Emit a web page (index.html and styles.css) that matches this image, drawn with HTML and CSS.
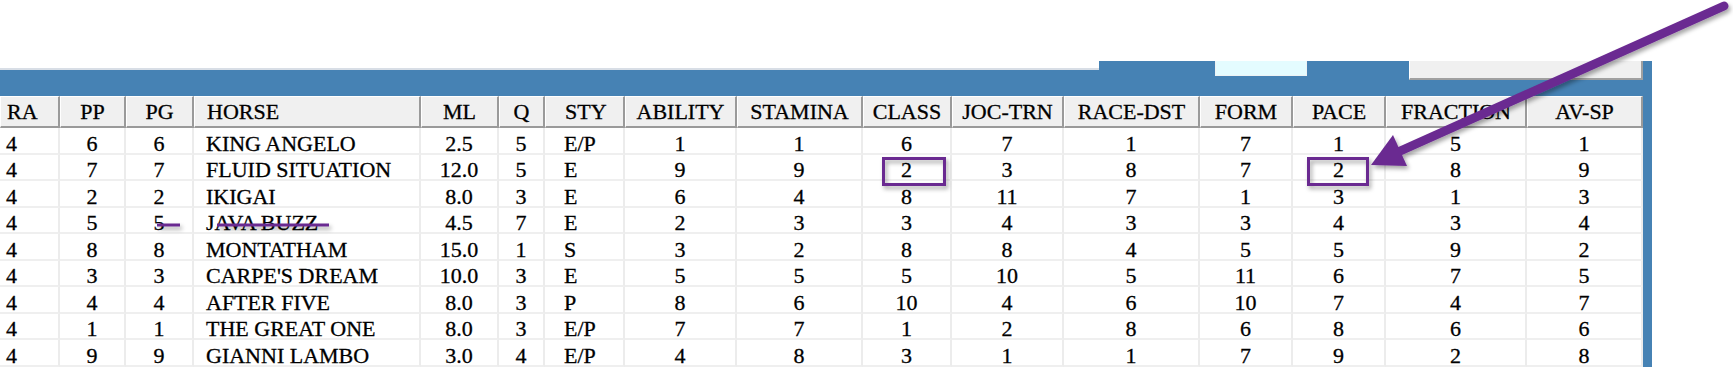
FILE: index.html
```html
<!DOCTYPE html>
<html lang="en">
<head>
  <meta charset="UTF-8" />
  <title>Race Grid</title>
  <link rel="stylesheet" href="styles.css">
</head>
<body>

  <div class="top"></div>

  <div class="frame">
    <div class="bar">
      <div class="strip"></div>
      <div class="field"></div>
      <div class="btn"></div>
    </div>

    <table class="grid">
      <colgroup>
        <col style="width:60px"><col style="width:66px"><col style="width:68px"><col style="width:227px">
        <col style="width:78px"><col style="width:46px"><col style="width:80px"><col style="width:112px">
        <col style="width:126px"><col style="width:89px"><col style="width:112px"><col style="width:136px">
        <col style="width:93px"><col style="width:93px"><col style="width:141px"><col style="width:116px">
      </colgroup>
      <thead>
        <tr>
          <th class="ra">RA</th><th>PP</th><th>PG</th><th class="name">HORSE</th>
          <th>ML</th><th>Q</th><th class="sty">STY</th><th>ABILITY</th>
          <th>STAMINA</th><th>CLASS</th><th>JOC-TRN</th><th>RACE-DST</th>
          <th>FORM</th><th>PACE</th><th>FRACTION</th><th>AV-SP</th>
        </tr>
      </thead>
      <tbody>
        <tr><td class="ra">4</td><td>6</td><td>6</td><td class="name">KING ANGELO</td><td>2.5</td><td>5</td><td class="sty">E/P</td><td>1</td><td>1</td><td>6</td><td>7</td><td>1</td><td>7</td><td>1</td><td>5</td><td>1</td></tr>
        <tr><td class="ra">4</td><td>7</td><td>7</td><td class="name">FLUID SITUATION</td><td>12.0</td><td>5</td><td class="sty">E</td><td>9</td><td>9</td><td>2</td><td>3</td><td>8</td><td>7</td><td>2</td><td>8</td><td>9</td></tr>
        <tr><td class="ra">4</td><td>2</td><td>2</td><td class="name">IKIGAI</td><td>8.0</td><td>3</td><td class="sty">E</td><td>6</td><td>4</td><td>8</td><td>11</td><td>7</td><td>1</td><td>3</td><td>1</td><td>3</td></tr>
        <tr><td class="ra">4</td><td>5</td><td>5</td><td class="name">JAVA BUZZ</td><td>4.5</td><td>7</td><td class="sty">E</td><td>2</td><td>3</td><td>3</td><td>4</td><td>3</td><td>3</td><td>4</td><td>3</td><td>4</td></tr>
        <tr><td class="ra">4</td><td>8</td><td>8</td><td class="name">MONTATHAM</td><td>15.0</td><td>1</td><td class="sty">S</td><td>3</td><td>2</td><td>8</td><td>8</td><td>4</td><td>5</td><td>5</td><td>9</td><td>2</td></tr>
        <tr><td class="ra">4</td><td>3</td><td>3</td><td class="name">CARPE'S DREAM</td><td>10.0</td><td>3</td><td class="sty">E</td><td>5</td><td>5</td><td>5</td><td>10</td><td>5</td><td>11</td><td>6</td><td>7</td><td>5</td></tr>
        <tr><td class="ra">4</td><td>4</td><td>4</td><td class="name">AFTER FIVE</td><td>8.0</td><td>3</td><td class="sty">P</td><td>8</td><td>6</td><td>10</td><td>4</td><td>6</td><td>10</td><td>7</td><td>4</td><td>7</td></tr>
        <tr><td class="ra">4</td><td>1</td><td>1</td><td class="name">THE GREAT ONE</td><td>8.0</td><td>3</td><td class="sty">E/P</td><td>7</td><td>7</td><td>1</td><td>2</td><td>8</td><td>6</td><td>8</td><td>6</td><td>6</td></tr>
        <tr><td class="ra">4</td><td>9</td><td>9</td><td class="name">GIANNI LAMBO</td><td>3.0</td><td>4</td><td class="sty">E/P</td><td>4</td><td>8</td><td>3</td><td>1</td><td>1</td><td>7</td><td>9</td><td>2</td><td>8</td></tr>
      </tbody>
    </table>
  </div>

  <!-- annotations drawn over the screenshot -->
  <svg class="marks" width="1733" height="371" viewBox="0 0 1733 371">
    <defs>
      <filter id="sh" x="-20%" y="-20%" width="140%" height="160%">
        <feDropShadow dx="2" dy="3" stdDeviation="2" flood-color="#000" flood-opacity="0.35"/>
      </filter>
    </defs>
    <g fill="none" stroke="#6b2a91" stroke-width="3" filter="url(#sh)">
      <rect x="883.5" y="158.5" width="61" height="26"/>
      <rect x="1308.5" y="158.5" width="59" height="26"/>
      <line x1="157" y1="225" x2="180" y2="225"/>
      <line x1="217" y1="225" x2="329" y2="225"/>
    </g>
    <g filter="url(#sh)">
      <line x1="1398" y1="152" x2="1724" y2="6" stroke="#6b2a91" stroke-width="9" stroke-linecap="round"/>
      <polygon points="1371,165 1393,135 1407,166" fill="#6b2a91"/>
    </g>
  </svg>

</body>
</html>
```

FILE: styles.css
```css
html, body {
  margin: 0;
  height: 371px;
  overflow: hidden;
}

body {
  position: relative;
  background: #fff;
  font-family: "Liberation Serif", "Times New Roman", serif;
  color: #000;
}

.top {
  height: 61px;
}

.frame {
  width: 1652px;
  box-sizing: border-box;
  padding-right: 9px;
  background: #4682b4;
}

.bar {
  display: flex;
  align-items: flex-start;
  height: 35px;
}

.strip {
  width: 1100px;
  height: 7px;
  background: #fff;
  border-bottom: 2px solid #d8dee6;
}

.field {
  margin-left: 116px;
  width: 92px;
  height: 15px;
  box-sizing: border-box;
  background: #e4fcff;
  border: 1px solid #eef2f4;
  border-top: none;
}

.btn {
  margin-left: 102px;
  width: 234px;
  height: 19px;
  box-sizing: border-box;
  background: #f0f0f0;
  border-right: 2px solid #a0a0a0;
  border-bottom: 2px solid #a0a0a0;
  border-left: 1px solid #fff;
}

.grid {
  width: 1643px;
  table-layout: fixed;
  border-collapse: separate;
  border-spacing: 0;
  font-size: 22px;
  line-height: 20px;
  -webkit-text-stroke: 0.3px #000;
}

.grid th,
.grid td {
  box-sizing: border-box;
  padding: 0;
  text-align: center;
  white-space: nowrap;
}

.grid th {
  height: 32px;
  font-weight: normal;
  background: #f0f0f0;
  border-top: 1px solid #fff;
  border-left: 1px solid #fff;
  border-right: 2px solid #9a9a9a;
  border-bottom: 2px solid #9a9a9a;
}

.grid td {
  height: 26.5px;
  padding-top: 7px;
  line-height: 16px;
  background: #fff;
  border-right: 2px solid #ececec;
  border-bottom: 2px solid #efefef;
}

.grid .ra {
  text-align: left;
  padding-left: 6px;
}

.grid .name {
  text-align: left;
  padding-left: 12px;
}

.grid .sty {
  text-align: left;
  padding-left: 19px;
}

.marks {
  position: absolute;
  top: 0;
  left: 0;
  pointer-events: none;
}
```
